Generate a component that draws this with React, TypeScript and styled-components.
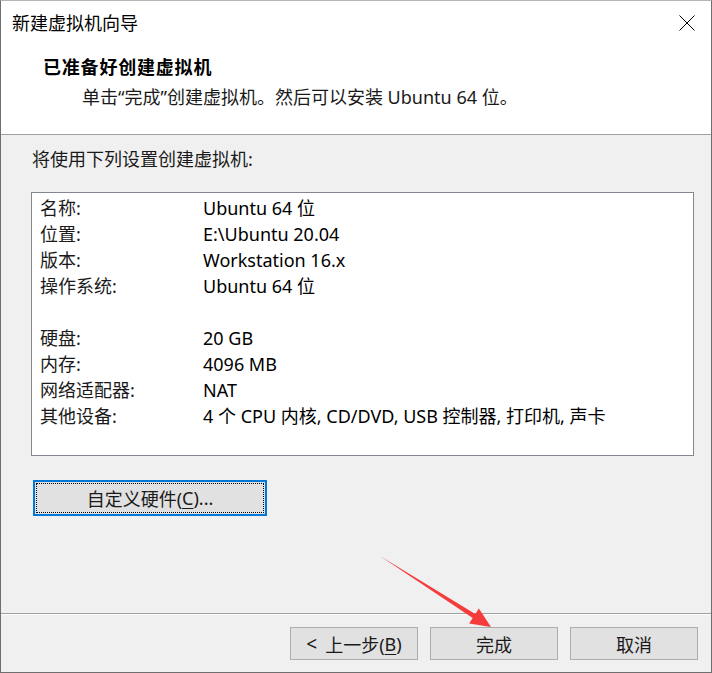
import styled, { createGlobalStyle } from "styled-components";

const GlobalStyle = createGlobalStyle`
	html, body {
		margin: 0;
		padding: 0;
		background: #ffffff;
	}
	* {
		box-sizing: border-box;
	}
`;

interface SettingRow {
	label: string;
	value: string;
}

const generalRows: SettingRow[] = [
	{ label: "名称:", value: "Ubuntu 64 位" },
	{ label: "位置:", value: "E:\\Ubuntu 20.04" },
	{ label: "版本:", value: "Workstation 16.x" },
	{ label: "操作系统:", value: "Ubuntu 64 位" },
];

const hardwareRows: SettingRow[] = [
	{ label: "硬盘:", value: "20 GB" },
	{ label: "内存:", value: "4096 MB" },
	{ label: "网络适配器:", value: "NAT" },
	{ label: "其他设备:", value: "4 个 CPU 内核, CD/DVD, USB 控制器, 打印机, 声卡" },
];

const CloseIcon = () => (
	<svg width="16" height="16" viewBox="0 0 16 16">
		<path d="M0.5 0.5 L15.5 15.5 M15.5 0.5 L0.5 15.5" stroke="#000" strokeWidth="1" fill="none" />
	</svg>
);

const Arrow = () => (
	<ArrowLayer width="712" height="673" viewBox="0 0 712 673">
		<polygon
			points="380,556 475.3,613.9 478.9,608.4 491,627 469.1,623.6 472.7,618.1"
			fill="#f53b3b"
		/>
	</ArrowLayer>
);

const App = () => {
	return (
		<>
			<GlobalStyle />
			<Window>
				<Header>
					<TitleBar>
						<WindowTitle>新建虚拟机向导</WindowTitle>
						<CloseButton>
							<CloseIcon />
						</CloseButton>
					</TitleBar>
					<StepTitle>已准备好创建虚拟机</StepTitle>
					<StepHint>单击“完成”创建虚拟机。然后可以安装 Ubuntu 64 位。</StepHint>
				</Header>

				<Body>
					<Intro>将使用下列设置创建虚拟机:</Intro>
					<SettingsBox>
						{generalRows.map((row) => (
							<Row key={row.label}>
								<Label>{row.label}</Label>
								<Value>{row.value}</Value>
							</Row>
						))}
						<Row />
						{hardwareRows.map((row) => (
							<Row key={row.label}>
								<Label>{row.label}</Label>
								<Value>{row.value}</Value>
							</Row>
						))}
					</SettingsBox>
					<CustomizeButton>
						<FocusRing>
							自定义硬件(<u>C</u>)...
						</FocusRing>
					</CustomizeButton>
				</Body>

				<Footer>
					<Button>
						<Chevron>&lt;</Chevron>上一步(<u>B</u>)
					</Button>
					<Button>完成</Button>
					<Button>取消</Button>
				</Footer>

				<Arrow />
			</Window>
		</>
	);
};

const font = `"Noto Sans", "Noto Sans CJK SC", sans-serif`;

const Window = styled.div`
	position: relative;
	display: flex;
	flex-direction: column;
	width: 712px;
	height: 673px;
	border: 1px solid #6f6f6f;
	border-top-color: #b5b5b5;
	background: #f0f0f0;
	font-family: ${font};
	font-size: 18px;
	color: #000;
	overflow: hidden;
`;

const Header = styled.div`
	height: 134px;
	background: #ffffff;
	border-bottom: 1px solid #a0a0a0;
	flex-shrink: 0;
`;

const TitleBar = styled.div`
	display: flex;
	align-items: center;
	justify-content: space-between;
	height: 43px;
	padding: 0 16px 0 11px;
`;

const WindowTitle = styled.span`
	font-size: 18px;
	line-height: 26px;
`;

const CloseButton = styled.span`
	display: flex;
	width: 16px;
	height: 16px;
	margin-top: 1px;
`;

const StepTitle = styled.div`
	margin-top: 8px;
	padding-left: 42px;
	font-weight: 700;
	font-size: 18px;
	line-height: 30px;
	letter-spacing: 0.8px;
`;

const StepHint = styled.div`
	padding-left: 81px;
	line-height: 30px;
	color: #1a1a1a;
`;

const Body = styled.div`
	flex: 1;
	display: flex;
	flex-direction: column;
	align-items: flex-start;
	padding: 11px 17px 0 30px;
`;

const Intro = styled.div`
	line-height: 26px;
	padding-left: 1px;
	color: #1a1a1a;
`;

const SettingsBox = styled.div`
	align-self: stretch;
	margin-top: 20px;
	height: 264px;
	padding: 2px 8px 0 8px;
	background: #ffffff;
	border: 1px solid #828790;
`;

const Row = styled.div`
	display: flex;
	height: 26px;
	line-height: 26px;
`;

const Label = styled.span`
	width: 163px;
	flex-shrink: 0;
	color: #1a1a1a;
`;

const Value = styled.span`
	white-space: nowrap;
`;

const CustomizeButton = styled.div`
	margin-top: 24px;
	margin-left: 2px;
	width: 234px;
	height: 36px;
	padding: 1px;
	border: 2px solid #0078d7;
	background: #e1e1e1;
`;

const FocusRing = styled.div`
	display: flex;
	align-items: center;
	justify-content: center;
	height: 100%;
	border: 1px dotted #000;
	color: #1a1a1a;

	u {
		text-underline-offset: 3px;
	}
`;

const Footer = styled.div`
	display: flex;
	justify-content: flex-end;
	gap: 12px;
	height: 59px;
	padding: 13px 13px 0 0;
	border-top: 1px solid #a0a0a0;
	box-shadow: inset 0 1px 0 #ffffff;
	flex-shrink: 0;
`;

const Button = styled.div`
	display: flex;
	align-items: center;
	justify-content: center;
	width: 128px;
	height: 33px;
	border: 1px solid #adadad;
	background: #e1e1e1;
	color: #1a1a1a;

	u {
		text-underline-offset: 3px;
	}
`;

const Chevron = styled.span`
	margin-right: 8px;
	font-size: 19px;
`;

const ArrowLayer = styled.svg`
	position: absolute;
	top: -1px;
	left: -1px;
	pointer-events: none;
`;

export default App;
